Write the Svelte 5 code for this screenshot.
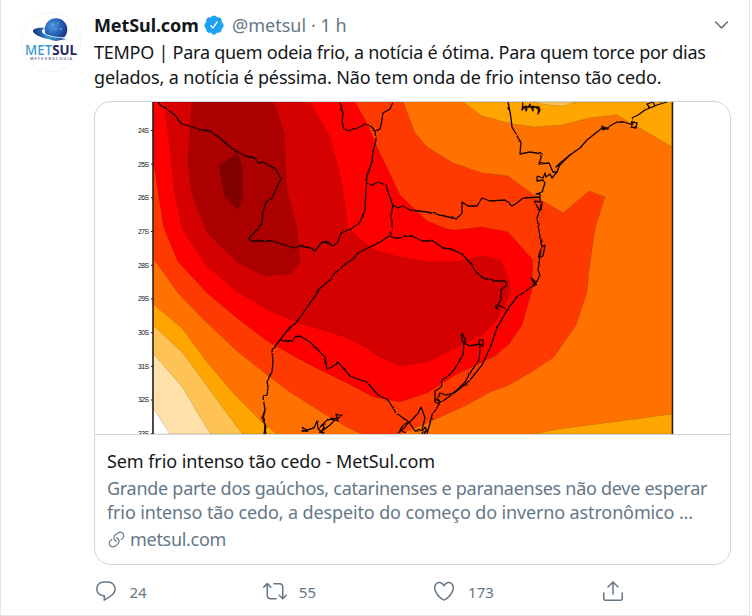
<script>
  const icons = {
    verified: "M22.5 12.5c0-1.58-.875-2.95-2.148-3.6.154-.435.238-.905.238-1.4 0-2.21-1.71-3.998-3.818-3.998-.47 0-.92.084-1.336.25C14.818 2.415 13.51 1.5 12 1.5s-2.816.917-3.437 2.25c-.415-.165-.866-.25-1.336-.25-2.11 0-3.818 1.79-3.818 4 0 .494.083.964.237 1.4-1.272.65-2.147 2.018-2.147 3.6 0 1.495.782 2.798 1.942 3.486-.02.17-.032.34-.032.514 0 2.21 1.708 4 3.818 4 .47 0 .92-.086 1.335-.25.62 1.334 1.926 2.25 3.437 2.25 1.512 0 2.818-.916 3.437-2.25.415.163.865.248 1.336.248 2.11 0 3.818-1.79 3.818-4 0-.174-.012-.344-.033-.513 1.158-.687 1.943-1.99 1.943-3.484zm-6.616-3.334l-4.334 6.5c-.145.217-.382.334-.625.334-.143 0-.288-.04-.416-.126l-.115-.094-2.415-2.415c-.293-.293-.293-.768 0-1.06s.768-.294 1.06 0l1.77 1.767 3.825-5.74c.23-.345.696-.436 1.04-.207.346.23.44.696.21 1.04z",
    chevron: "M20.207 8.147c-.39-.39-1.023-.39-1.414 0L12 14.94 5.207 8.147c-.39-.39-1.023-.39-1.414 0-.39.39-.39 1.023 0 1.414l7.5 7.5c.195.196.45.294.707.294s.512-.098.707-.293l7.5-7.5c.39-.39.39-1.022 0-1.413z",
    link: "M11.96 14.945c-.067 0-.136-.01-.203-.027-1.13-.318-2.097-.986-2.795-1.932-.832-1.125-1.176-2.508-.968-3.893s.942-2.605 2.068-3.438l3.53-2.608c2.322-1.716 5.61-1.224 7.33 1.1.83 1.127 1.175 2.51.967 3.895s-.943 2.605-2.07 3.438l-1.48 1.094c-.333.246-.804.175-1.05-.158-.246-.334-.176-.804.158-1.05l1.48-1.095c.803-.592 1.327-1.463 1.476-2.45.148-.988-.098-1.975-.69-2.778-1.225-1.656-3.572-2.01-5.23-.784l-3.53 2.608c-.802.593-1.326 1.464-1.475 2.45-.15.99.097 1.975.69 2.778.498.675 1.187 1.15 1.992 1.377.4.114.633.528.52.928-.092.33-.394.547-.722.547z M7.27 22.054c-1.61 0-3.197-.735-4.225-2.125-.832-1.127-1.176-2.51-.968-3.894s.943-2.605 2.07-3.438l1.478-1.094c.334-.245.805-.175 1.05.158s.177.804-.157 1.05l-1.48 1.095c-.803.593-1.326 1.464-1.475 2.45-.148.99.097 1.975.69 2.778 1.225 1.657 3.57 2.01 5.23.785l3.528-2.608c1.658-1.225 2.01-3.57.785-5.23-.498-.674-1.187-1.15-1.992-1.376-.4-.113-.633-.527-.52-.927.112-.4.528-.63.926-.522 1.13.318 2.096.986 2.794 1.932 1.717 2.324 1.224 5.612-1.1 7.33l-3.53 2.608c-.933.693-2.023 1.026-3.105 1.026z"
  };

  const actions = [
    { name: "reply", count: "24", path: "M14.046 2.242l-4.148-.01h-.002c-4.374 0-7.8 3.427-7.8 7.802 0 4.098 3.186 7.206 7.465 7.37v3.828c0 .108.044.286.12.403.142.225.384.347.632.347.138 0 .277-.038.402-.118.264-.168 6.473-4.14 8.088-5.506 1.902-1.61 3.04-3.97 3.043-6.312v-.017c-.006-4.367-3.43-7.787-7.8-7.788zm3.787 12.972c-1.134.96-4.862 3.405-6.772 4.643V16.67c0-.414-.335-.75-.75-.75h-.396c-3.66 0-6.318-2.476-6.318-5.886 0-3.534 2.768-6.302 6.3-6.302l4.147.01h.002c3.532 0 6.3 2.766 6.302 6.296-.003 1.91-.942 3.844-2.514 5.176z" },
    { name: "retweet", count: "55", path: "M23.77 15.67c-.292-.293-.767-.293-1.06 0l-2.22 2.22V7.65c0-2.068-1.683-3.75-3.75-3.75h-5.85c-.414 0-.75.336-.75.75s.336.75.75.75h5.85c1.24 0 2.25 1.01 2.25 2.25v10.24l-2.22-2.22c-.293-.293-.768-.293-1.06 0s-.294.768 0 1.06l3.5 3.5c.145.147.337.22.53.22s.383-.072.53-.22l3.5-3.5c.294-.292.294-.767 0-1.06zm-10.66 3.28H7.26c-1.24 0-2.25-1.01-2.25-2.25V6.46l2.22 2.22c.148.147.34.22.532.22s.384-.073.53-.22c.293-.293.293-.768 0-1.06l-3.5-3.5c-.293-.294-.768-.294-1.06 0l-3.5 3.5c-.294.292-.294.767 0 1.06s.767.293 1.06 0l2.22-2.22V16.7c0 2.068 1.683 3.75 3.75 3.75h5.85c.414 0 .75-.336.75-.75s-.337-.75-.75-.75z" },
    { name: "like", count: "173", path: "M12 21.638h-.014C9.403 21.59 1.95 14.856 1.95 8.478c0-3.064 2.525-5.754 5.403-5.754 2.29 0 3.83 1.58 4.646 2.73.814-1.148 2.354-2.73 4.645-2.73 2.88 0 5.404 2.69 5.404 5.755 0 6.376-7.454 13.11-10.037 13.157H12zM7.354 4.225c-2.08 0-3.903 1.988-3.903 4.255 0 5.74 7.034 11.596 8.55 11.658 1.518-.062 8.55-5.917 8.55-11.658 0-2.267-1.823-4.255-3.903-4.255-2.528 0-3.94 2.936-3.952 2.965-.23.562-1.156.562-1.387 0-.014-.03-1.425-2.965-3.954-2.965z" },
    { name: "share", count: "", path: "M17.53 7.47l-5-5c-.293-.293-.768-.293-1.06 0l-5 5c-.294.293-.294.768 0 1.06s.767.294 1.06 0l3.72-3.72V15c0 .414.336.75.75.75s.75-.336.75-.75V4.81l3.72 3.72c.146.147.338.22.53.22s.384-.072.53-.22c.293-.293.293-.767 0-1.06z M19.708 21.944H4.292C3.028 21.944 2 20.916 2 19.652V14c0-.414.336-.75.75-.75s.75.336.75.75v5.652c0 .437.355.792.792.792h15.416c.437 0 .792-.355.792-.792V14c0-.414.336-.75.75-.75s.75.336.75.75v5.652c0 1.264-1.028 2.292-2.292 2.292z" }
  ];

  // temperature bands, painted from the outside in
  const bands = [
    { color: "#ffa500", points: "463,102 482,116 490,118 512,124 535,127 562,125 590,118 617,115 672,147 672,102" },
    { color: "#ffc255", points: "533,102 545,104.5 563,106 576,102" },
    { color: "#ffa500", points: "535,434 558,429 605,423 672,414 672,434" },
    { color: "#ffa500", points: "153,304 182,328 207,362 235,395 260,420 277,434 153,434" },
    { color: "#ffc255", points: "153,325 183,353 210,390 237,427 243,434 153,434" },
    { color: "#ffe0a8", points: "153,353 183,388 200,417 211,434 153,434" },
    { color: "#ffffff", points: "153,408 170,434 153,434" },
    { color: "#ff3a00", points: "403,102 415,133 427,147 453,163 482,173 500,175 508,176 538,198 563,213 589,191 605,197 595,228 589,270 587,292 576,325 554,357 533,371 509,385 490,392 467,405 425,424 400,434 362,434 347,427 323,413 290,392 270,377 237,351 202,318 178,293 158,265 153,259 153,102" },
    { color: "#ff0000", points: "355,102 367,123 377,147 400,195 427,221 447,229 455,230 482,227 508,232 533,260 532,290 522,325 509,344 495,356 457,374 427,393 400,402 373,397 345,382 318,369 290,354 267,341 237,318 207,293 182,266 178,262 164,228 158,192 153,158 153,102" },
    { color: "#d50000", points: "163,102 168,132 175,195 183,230 207,266 235,290 270,311 300,323 345,337 367,348 378,356 400,366 427,362 457,347 483,334 495,322 511,292 508,278 501,261 482,256 455,262 428,262 400,257 373,250 348,228 342,185 337,163 329,135 317,115 310,102" },
    { color: "#ac0000", points: "192,102 188,162 192,195 207,233 237,262 265,276 290,274 300,262 297,228 287,192 284,133 274,102" },
    { color: "#800000", points: "237,153 242,165 243,197 238,210 225,197 219,166" }
  ];

  // rivers, borders and coastline
  const lines = [
    "158,102 161,106 166,108 172,113 177,117 178,120 182,124 192,127 202,130 210,131 220,138 230,147 245,156 255,158 259,163 263,162 272,167 277,171 281,179 277,187 272,198 266,202 263,212 262,223 255,232 249,238 251,241 262,241 273,241 282,244 294,248 300,246 311,248 315,251 322,242 328,243 333,246 338,242 341,233 351,229 360,222 365,210 366,190 367,175 372,162 373,152 376,140 375,131 372,127 365,124 360,127 350,131 344,129 342,122 343,113 340,102",
    "375,131 380,129 381,125 383,113 390,109 393,102",
    "367,184 372,185 378,182 386,185 389,195 393,205 397,208 403,206 410,210 427,212 440,215 457,219 462,213 462,202 468,206 477,206 482,198 490,201 505,200 512,206 517,203 523,198 540,197",
    "393,205 392,210 391,216 392,222 392,230 389,236",
    "389,236 380,242 366,249 358,253 353,259 347,263 343,266 333,275 331,279 318,290 316,295 310,303 303,313 295,324 290,327 280,340 272,350 273,362 272,372 267,382 268,387 267,395 263,397 265,410 262,418 264,426 266,434",
    "265,410 263,419 266,427 264,434",
    "280,340 292,342 295,337 300,336 310,342 325,357 327,369 332,367 338,362 350,376 358,379 367,382 378,395 388,400 396,413 409,422 404,428 398,433",
    "409,422 415,431 422,430 425,418 423,412 421,407 418,413 411,421 403,425 400,430 406,433",
    "389,236 395,238 400,238 404,236 412,236 418,239 423,241 433,241 443,248 452,249 463,255 472,265 475,271 483,278 495,281 505,281 507,285 501,290 501,300 495,307 497,310 498,305 507,309",
    "667,102 657,105 650,108 647,104 653,102 655,106 645,110 638,115 632,118 631,127 636,128 637,123 633,122 632,125 624,122 617,122 608,127 603,130 602,126 608,129 602,128 587,140 580,148 570,155 560,163 556,167 560,164 557,172 552,178 550,174 546,177 545,173 543,178 537,176 537,181 543,180 545,183 542,192 536,194 540,194 540,202 535,201 538,209 541,210 542,202 537,218 540,237 542,247 545,245 543,256 538,258 541,249 538,270 540,275 535,285 531,278 535,281 533,286 517,297 507,310 497,328 490,348 482,365 470,380 457,391 440,403 432,415 427,434",
    "559,166 571,154",
    "508,102 510,112 511,118 512,127 521,143 520,154 530,152 542,154 539,164 549,163 553,172 558,172",
    "462,333 465,338 464,343 463,355 457,365 454,370 449,375 442,380 440,388 435,391 435,402 439,404 439,400 435,400",
    "462,334 462,341 469,346 480,344 483,347 483,340 479,340 480,350 479,360 472,370 465,382 458,389 453,393 446,395 440,393 437,399 441,403",
    "302,427 308,431 303,431 314,428 317,421 318,428 325,424 322,431 330,425 334,421 331,418 338,421 336,414 342,416 338,418 327,420 318,429 324,433 319,432",
    "523,103 522,110 526,106 526,111 530,104 533,111 533,106 540,110 538,114 539,107 528,107 523,107",
    "422,434 425,427 427,430 424,434"
  ];

  const labels = ["24S", "25S", "26S", "27S", "28S", "29S", "30S", "31S", "32S", "33S"];
</script>

<main>
  <article class="tweet">
    <svg class="avatar" viewBox="0 0 60 60">
      <defs>
        <radialGradient id="planet" cx="0.35" cy="0.35" r="0.8">
          <stop offset="0" stop-color="#4c9be0" />
          <stop offset="0.55" stop-color="#2257ae" />
          <stop offset="1" stop-color="#20206c" />
        </radialGradient>
        <linearGradient id="ring">
          <stop offset="0" stop-color="#1f2f80" />
          <stop offset="0.5" stop-color="#2f9ad8" />
          <stop offset="1" stop-color="#253c92" />
        </linearGradient>
      </defs>
      <circle cx="30" cy="30" r="29.7" fill="#fff" stroke="#ececf0" stroke-width="0.6" />
      <circle cx="35" cy="17.5" r="11.3" fill="url(#planet)" />
      <path d="M24 16C14 15 10 18 13 21c5 5 21 9 33 6 -8-.5-19-3-24-6-2-1.500-1-3.500 2-5z" fill="url(#ring)" />
      <path d="M22 21c6 3.500 14 5 23 4.500" fill="none" stroke="#e8f5fd" stroke-width="0.9" />
      <g fill="#d5ecfc">
        <circle cx="32" cy="12" r="0.6" /><circle cx="37" cy="11" r="0.6" /><circle cx="40" cy="17" r="0.7" /><circle cx="35" cy="17" r="0.5" />
      </g>
      <text class="logo" x="4" y="43" textLength="52" lengthAdjust="spacingAndGlyphs"><tspan class="met">MET</tspan><tspan class="sul">SUL</tspan></text>
      <text class="sublogo" x="9" y="47.500" textLength="42">METEOROLOGIA</text>
    </svg>

    <div class="content">
      <header>
        <strong>MetSul.com</strong>
        <svg class="verified" viewBox="0 0 24 24"><path d={icons.verified} /></svg>
        <span class="handle">@metsul</span>
        <span class="time">· 1 h</span>
        <svg class="chevron" viewBox="0 0 24 24"><path d={icons.chevron} /></svg>
      </header>

      <p class="text">
        <span class="t1">TEMPO | Para quem odeia frio, a notícia é ótima. Para quem torce por dias</span>
        <span class="t2">gelados, a notícia é péssima. Não tem onda de frio intenso tão cedo.</span>
      </p>

      <div class="card">
        <svg class="map" viewBox="95 102 635 332">
          <defs>
            <filter id="rough" x="0" y="0" width="1" height="1">
              <feTurbulence type="fractalNoise" baseFrequency="0.18" numOctaves="1" seed="4" />
              <feDisplacementMap in="SourceGraphic" scale="2.500" xChannelSelector="R" yChannelSelector="G" />
            </filter>
          </defs>
          <rect x="153" y="102" width="519" height="332" fill="#ff7200" />
          {#each bands as band}
            <polygon class="band" points={band.points} fill={band.color} />
          {/each}
          <g class="lines" filter="url(#rough)">
            {#each lines as points}
              <polyline {points} />
            {/each}
          </g>
          <path class="frame" d="M153 102V434M672.500 102V434" />
          {#each labels as label, i}
            <text class="degree" x="149" y={132.8 + i * 33.7} textLength="11">{label}</text>
            <path class="tick" d="M151 {130.4 + i * 33.7}h2" />
          {/each}
        </svg>
        <div class="info">
          <div class="title"><span>Sem frio intenso tão cedo - MetSul.com</span></div>
          <div class="desc">
            <span class="d1">Grande parte dos gaúchos, catarinenses e paranaenses não deve esperar</span>
            <span class="d2">frio intenso tão cedo, a despeito do começo do inverno astronômico ...</span>
          </div>
          <div class="domain">
            <svg viewBox="0 0 24 24"><path d={icons.link} /></svg>
            <span>metsul.com</span>
          </div>
        </div>
      </div>

      <footer>
        {#each actions as action}
          <div class="action">
            <svg viewBox="0 0 24 24" aria-label={action.name}><path d={action.path} /></svg>
            <span>{action.count}</span>
          </div>
        {/each}
      </footer>
    </div>
  </article>
</main>

<style>
  :global(body) {
    background: #fff;
    overflow: hidden;
  }
  main {
    font-family: "Noto Sans", "Open Sans", sans-serif;
    font-size: 18px;
    color: #14171a;
  }
  .tweet {
    box-sizing: border-box;
    width: 750px;
    height: 616px;
    padding: 12px 18px 0 20px;
    border: 1px solid #e1e8ed;
    border-top: none;
    display: flex;
    gap: 13px;
  }
  svg {
    flex: none;
    fill: currentColor;
  }
  .avatar {
    width: 60px;
    height: 60px;
  }
  .logo {
    font: 600 14.5px "Open Sans", sans-serif;
  }
  .met {
    fill: #3f9fd2;
  }
  .sul {
    fill: #29235c;
    font-weight: 700;
  }
  .sublogo {
    font: 600 3.8px "Open Sans", sans-serif;
    fill: #55527a;
  }
  .content {
    width: 637px;
  }
  header {
    height: 28px;
    display: flex;
    align-items: center;
  }
  header span,
  strong {
    position: relative;
    top: -1px;
  }
  strong {
    width: 109px;
    white-space: nowrap;
    letter-spacing: -0.1px;
  }
  .verified {
    width: 22px;
    height: 22px;
    margin-bottom: 3px;
    color: #1da1f2;
  }
  .handle {
    margin-left: 7px;
    width: 79px;
    color: #657786;
  }
  .time {
    color: #657786;
  }
  .chevron {
    width: 19px;
    height: 19px;
    margin: 0 0 3px auto;
    color: #657786;
  }
  .text {
    margin: 0;
    line-height: 25px;
  }
  .text span,
  .desc span {
    display: block;
    white-space: nowrap;
    width: max-content;
  }
  .t1 {
    letter-spacing: -0.25px;
  }
  .t2 {
    letter-spacing: -0.14px;
  }
  .card {
    box-sizing: border-box;
    height: 464px;
    margin-top: 11px;
    border: 1px solid #ccd6dd;
    border-radius: 17px;
    overflow: hidden;
  }
  .map {
    display: block;
    width: 635px;
    height: 332px;
  }
  .band {
    stroke: rgba(60, 40, 0, 0.25);
    stroke-width: 0.7;
  }
  .lines {
    fill: none;
    stroke: #150000;
    stroke-width: 1.3;
    stroke-linejoin: round;
  }
  .frame,
  .tick {
    fill: none;
    stroke: #2b1a1a;
    stroke-width: 1.5;
  }
  .tick {
    stroke-width: 1;
  }
  .degree {
    font: 6.8px "Liberation Sans", sans-serif;
    fill: #111;
    text-anchor: end;
  }
  .info {
    border-top: 1px solid #ccd6dd;
    padding: 13px 12px;
    color: #657786;
  }
  .title {
    height: 28px;
    line-height: 26px;
    letter-spacing: -0.08px;
    color: #14171a;
  }
  .desc {
    line-height: 24px;
  }
  .d1 {
    letter-spacing: -0.28px;
  }
  .d2 {
    letter-spacing: -0.13px;
  }
  .domain {
    display: flex;
    align-items: center;
    gap: 4px;
    margin-top: 2px;
    line-height: 26px;
    letter-spacing: -0.3px;
  }
  .domain svg {
    width: 19px;
    height: 19px;
  }
  footer {
    display: grid;
    grid-template-columns: repeat(4, 169.3px);
    margin-top: 12px;
    color: #657786;
  }
  .action {
    display: flex;
    align-items: center;
    gap: 12px;
    font-size: 15px;
    line-height: 25px;
  }
  .action span {
    padding-top: 3px;
  }
  .action svg {
    width: 24px;
    height: 24px;
    margin-left: -0.5px;
  }
</style>
